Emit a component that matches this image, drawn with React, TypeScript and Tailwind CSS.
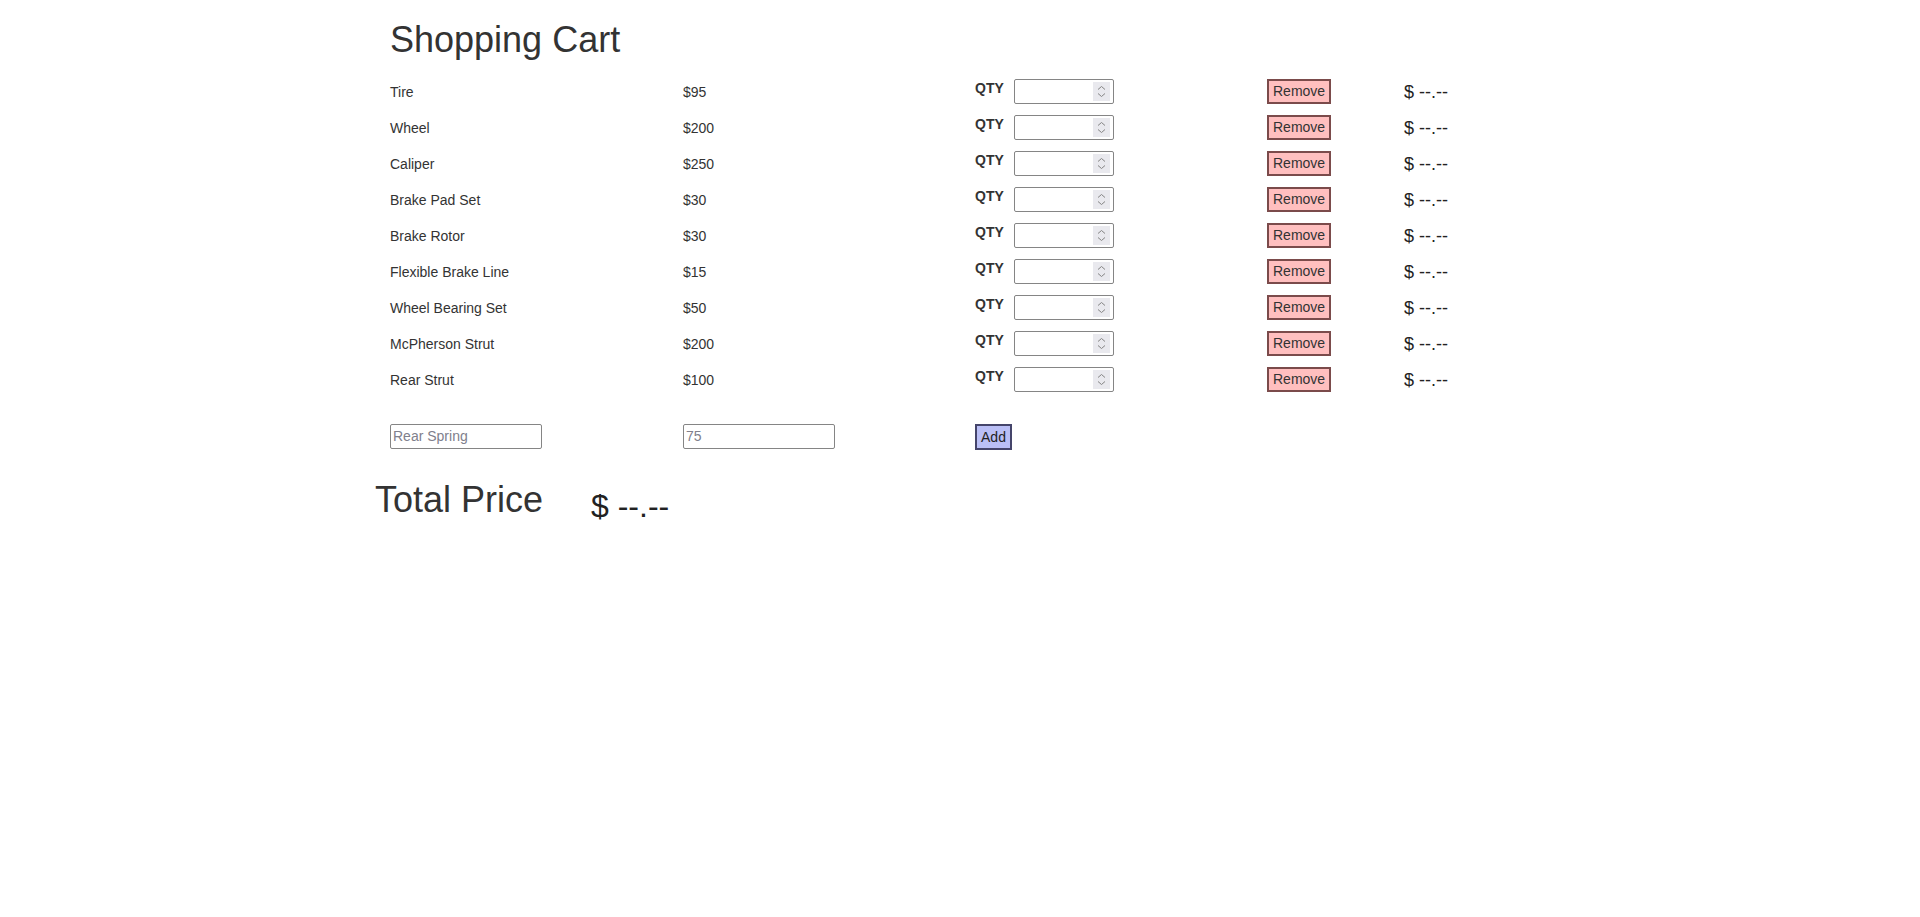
import React from "react";

const items: [string, string][] = [
  ["Tire", "$95"],
  ["Wheel", "$200"],
  ["Caliper", "$250"],
  ["Brake Pad Set", "$30"],
  ["Brake Rotor", "$30"],
  ["Flexible Brake Line", "$15"],
  ["Wheel Bearing Set", "$50"],
  ["McPherson Strut", "$200"],
  ["Rear Strut", "$100"],
];

function Spinner() {
  return (
    <div className="w-[17px] h-[19px] bg-[#e9e9ee] flex items-center justify-center">
      <svg width="17" height="19" viewBox="0 0 17 19" fill="none">
        <path d="M5 7.5 L8.5 4.5 L12 7.5" stroke="#858585" strokeWidth="1" />
        <path d="M5 11.5 L8.5 14.5 L12 11.5" stroke="#858585" strokeWidth="1" />
      </svg>
    </div>
  );
}

function Row({ name, price }: { name: string; price: string }) {
  return (
    <div className="flex items-start h-[36px] text-[14px] leading-[20px] text-[#333]">
      <div className="w-[293px] pt-[12px]">{name}</div>
      <div className="w-[292px] pt-[12px]">{price}</div>
      <div className="w-[292px] pt-[8px] flex items-start">
        <span className="font-bold w-[39px]">QTY</span>
        <div className="mt-[1px] w-[100px] h-[25px] border border-[#858585] rounded-[2px] bg-white flex items-center justify-end pr-[3px]">
          <Spinner />
        </div>
      </div>
      <div className="w-[137px] pt-[9px]">
        <button className="h-[25px] px-[4px] border-2 border-[#7b4b4b] bg-[#ffbfbf] text-[14px] leading-[19px] text-[#333]">
          Remove
        </button>
      </div>
      <div className="pt-[12px] text-[18px] leading-[20px] text-[#222]">$ --.--</div>
    </div>
  );
}

export default function App() {
  return (
    <div className="min-h-[917px] bg-white" style={{ fontFamily: '"Liberation Sans", Arial, sans-serif' }}>
      <div className="w-[1140px] mx-auto">
        <h1 className="mt-[20px] mb-[10px] text-[36px] leading-[1.1] text-[#333]">Shopping Cart</h1>
        <div className="flex flex-col">
          {items.map(([n, p]) => (
            <Row key={n} name={n} price={p} />
          ))}
        </div>
        <div className="mt-[30px] flex items-start text-[14px]">
          <div className="w-[293px]">
            <input
              className="w-[152px] h-[25px] border border-[#858585] rounded-[2px] px-[2px] text-[14px] outline-none placeholder:text-[#80808c]"
              placeholder="Rear Spring"
            />
          </div>
          <div className="w-[292px]">
            <input
              className="w-[152px] h-[25px] border border-[#858585] rounded-[2px] px-[2px] text-[14px] outline-none placeholder:text-[#80808c]"
              placeholder="75"
            />
          </div>
          <div>
            <button className="h-[26px] w-[37px] border-2 border-[#45456b] bg-[#babff6] text-[14px] leading-[20px] text-[#222]">
              Add
            </button>
          </div>
        </div>
        <div className="-ml-[15px] mt-[30px] flex items-start text-[#333]">
          <h1 className="w-[216px] text-[36px] leading-[1.1]">Total Price</h1>
          <h2 className="mt-[9px] text-[32px] leading-[1.1] text-[#222]">$ --.--</h2>
        </div>
      </div>
    </div>
  );
}
